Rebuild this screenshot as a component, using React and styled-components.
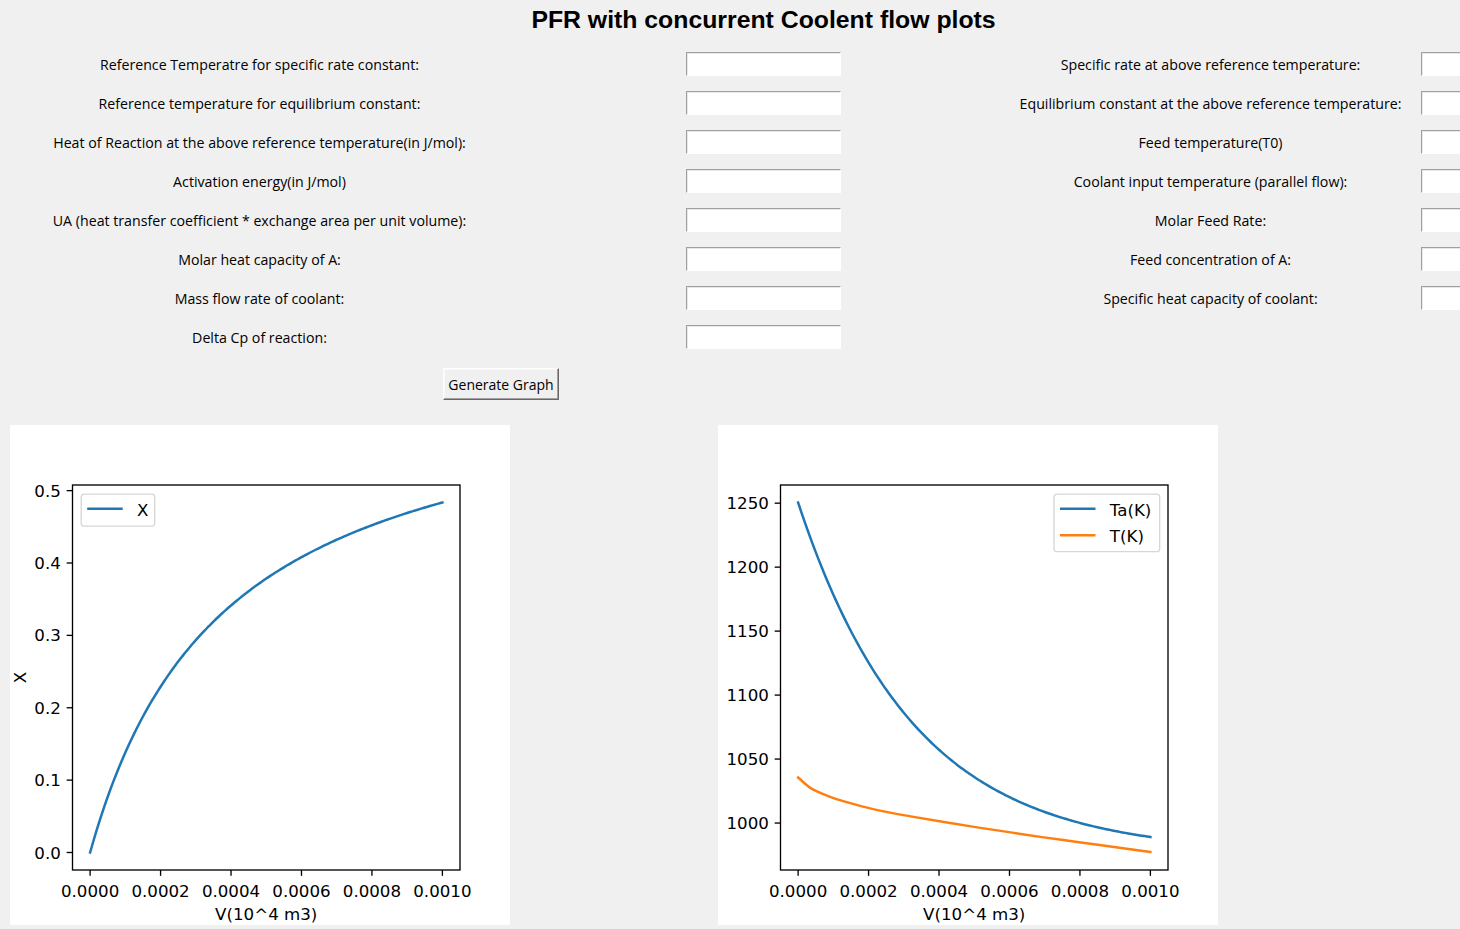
import React from 'react';
import styled, { createGlobalStyle } from 'styled-components';

const GlobalStyle = createGlobalStyle`
  html, body {
    margin: 0;
    padding: 0;
    background: #f0f0f0;
    overflow: hidden;
  }
  * { box-sizing: border-box; }
`;

const Window = styled.div`
  width: 1460px;
  height: 929px;
  background: #f0f0f0;
  overflow: hidden;
  font-family: "Open Sans", "Noto Sans", sans-serif;
  color: #000;
`;

const Form = styled.div`
  display: grid;
  grid-template-columns: 519px 489px 405px 1fr;
  grid-template-rows: 44px;
  grid-auto-rows: 39px;
  align-items: center;
`;

const Title = styled.h1`
  grid-column: 2;
  grid-row: 1;
  align-self: start;
  justify-self: center;
  margin: 0;
  line-height: 40px;
  font-family: "Liberation Sans", Arial, sans-serif;
  font-weight: bold;
  font-size: 24.8px;
  white-space: nowrap;
`;

const Label = styled.label`
  grid-column: ${p => p.$col};
  grid-row: ${p => p.$row};
  justify-self: center;
  padding-top: 2px;
  font-size: 14.2px;
  line-height: 19px;
  white-space: nowrap;
`;

const Entry = styled.input`
  grid-column: ${p => p.$col};
  grid-row: ${p => p.$row};
  justify-self: ${p => (p.$edge ? 'start' : 'center')};
  margin-left: ${p => (p.$edge ? '8px' : '0')};
  width: 155px;
  height: 24px;
  padding: 0 3px;
  background: #fff;
  border: 1px solid;
  border-color: #a0a0a0 #ffffff #ffffff #a0a0a0;
  box-shadow: inset 1px 1px 0 #e8e8e8;
  outline: none;
  font: inherit;
`;

const ButtonRow = styled.div`
  display: flex;
  padding-left: 443px;
  margin-top: 12px;
`;

const TkButton = styled.button`
  width: 116px;
  height: 32px;
  padding: 0;
  background: #f0f0f0;
  border: 1px solid;
  border-color: #ffffff #696969 #696969 #ffffff;
  box-shadow: inset -1px -1px 0 #a0a0a0, inset 1px 1px 0 #f8f8f8;
  font-family: "Open Sans", "Noto Sans", sans-serif;
  font-size: 14px;
  color: #000;
  cursor: pointer;
`;

const ChartRow = styled.div`
  display: flex;
  gap: 208px;
  padding-left: 10px;
  margin-top: 25px;
`;

const Figure = styled.svg`
  display: block;
  width: 500px;
  height: 500px;
  background: #fff;
  font-family: "DejaVu Sans", sans-serif;
`;

const leftFields = [
  'Reference Temperatre for specific rate constant:',
  'Reference temperature for equilibrium constant:',
  'Heat of Reaction at the above reference temperature(in J/mol):',
  'Activation energy(in J/mol)',
  'UA (heat transfer coefficient * exchange area per unit volume):',
  'Molar heat capacity of A:',
  'Mass flow rate of coolant:',
  'Delta Cp of reaction:',
];

const rightFields = [
  'Specific rate at above reference temperature:',
  'Equilibrium constant at the above reference temperature:',
  'Feed temperature(T0)',
  'Coolant input temperature (parallel flow):',
  'Molar Feed Rate:',
  'Feed concentration of A:',
  'Specific heat capacity of coolant:',
];

// V in units of 1e-3 m3
const sample = (fn, n = 120) =>
  Array.from({ length: n + 1 }, (_, i) => {
    const v = i / n;
    return [v, fn(v)];
  });

const conversion = sample(v => (0.6696 * 2.6 * v) / (1 + 2.6 * v));
const coolantTemp = sample(v => 976 + 274.5 * Math.exp(-3.042 * v));
const reactorTemp = [
  [0, 1035.6], [0.0358, 1027.3], [0.0831, 1021.3], [0.1304, 1016.9], [0.2249, 1010.1],
  [0.3194, 1005.2], [0.414, 1000.8], [0.5085, 996.6], [0.603, 992.7], [0.6976, 988.8],
  [0.7921, 985.2], [0.8866, 981.6], [1.0, 977.4],
];

const AX = { left: 62.5, right: 450, top: 60, bottom: 445 };
const FS = 16.67;
const TICK = 5.83;

// monotone cubic through points (already in pixel space, x increasing)
function monotonePath(pts) {
  const n = pts.length;
  const dx = [];
  const m = [];
  for (let i = 0; i < n - 1; i++) {
    dx.push(pts[i + 1][0] - pts[i][0]);
    m.push((pts[i + 1][1] - pts[i][1]) / dx[i]);
  }
  const t = pts.map((_, i) => {
    if (i === 0) return m[0];
    if (i === n - 1) return m[n - 2];
    if (m[i - 1] * m[i] <= 0) return 0;
    return (3 * (dx[i - 1] + dx[i])) /
      ((2 * dx[i] + dx[i - 1]) / m[i - 1] + (dx[i] + 2 * dx[i - 1]) / m[i]);
  });
  let d = `M${pts[0][0].toFixed(2)},${pts[0][1].toFixed(2)}`;
  for (let i = 0; i < n - 1; i++) {
    const h = dx[i] / 3;
    d += ` C${(pts[i][0] + h).toFixed(2)},${(pts[i][1] + t[i] * h).toFixed(2)}` +
      ` ${(pts[i + 1][0] - h).toFixed(2)},${(pts[i + 1][1] - t[i + 1] * h).toFixed(2)}` +
      ` ${pts[i + 1][0].toFixed(2)},${pts[i + 1][1].toFixed(2)}`;
  }
  return d;
}

const xTicks = [0, 0.2, 0.4, 0.6, 0.8, 1.0];

function Plot({ yDomain, yTicks, yFormat, series, legend, yLabel }) {
  const [x0, x1] = [-0.05, 1.05];
  const [y0, y1] = yDomain;
  const sx = v => AX.left + ((v - x0) / (x1 - x0)) * (AX.right - AX.left);
  const sy = v => AX.bottom - ((v - y0) / (y1 - y0)) * (AX.bottom - AX.top);

  return (
    <Figure viewBox="0 0 500 500">
      {series.map(s => (
        <path
          key={s.name}
          d={monotonePath(s.data.map(([v, y]) => [sx(v), sy(y)]))}
          fill="none"
          stroke={s.color}
          strokeWidth="2.5"
          strokeLinecap="square"
        />
      ))}
      <rect
        x={AX.left}
        y={AX.top}
        width={AX.right - AX.left}
        height={AX.bottom - AX.top}
        fill="none"
        stroke="#000"
        strokeWidth="1.33"
      />
      {yTicks.map(t => (
        <g key={t}>
          <line x1={AX.left - TICK} x2={AX.left} y1={sy(t)} y2={sy(t)} stroke="#000" strokeWidth="1.33" />
          <text x={AX.left - 2 * TICK} y={sy(t) + 6.1} fontSize={FS} textAnchor="end" fill="#000">
            {yFormat(t)}
          </text>
        </g>
      ))}
      {xTicks.map(t => (
        <g key={t}>
          <line x1={sx(t)} x2={sx(t)} y1={AX.bottom} y2={AX.bottom + TICK} stroke="#000" strokeWidth="1.33" />
          <text x={sx(t)} y={472.1} fontSize={FS} textAnchor="middle" fill="#000">
            {(t / 1000).toFixed(4)}
          </text>
        </g>
      ))}
      <text x={(AX.left + AX.right) / 2} y={494.5} fontSize={FS} textAnchor="middle" fill="#000">
        V(10^4 m3)
      </text>
      {yLabel && (
        <text
          transform="rotate(-90)"
          x={-(AX.top + AX.bottom) / 2}
          y={15.8}
          fontSize={FS}
          textAnchor="middle"
          fill="#000"
        >
          {yLabel}
        </text>
      )}
      <rect
        x={legend.x}
        y={legend.y}
        width={legend.w}
        height={legend.h}
        rx="3.3"
        fill="#fff"
        fillOpacity="0.8"
        stroke="#cccccc"
        strokeOpacity="0.8"
        strokeWidth="1.33"
      />
      {series.map((s, i) => {
        const cy = legend.y + 14.5 + i * 26.6;
        return (
          <g key={s.name}>
            <line
              x1={legend.x + 6}
              x2={legend.x + 41.5}
              y1={cy}
              y2={cy}
              stroke={s.color}
              strokeWidth="2.5"
            />
            <text x={legend.x + 55.8} y={cy + 7} fontSize={FS} fill="#000">
              {s.name}
            </text>
          </g>
        );
      })}
    </Figure>
  );
}

export default function App() {
  return (
    <Window>
      <GlobalStyle />
      <Form>
        <Title>PFR with concurrent Coolent flow plots</Title>
        {leftFields.map((text, i) => (
          <React.Fragment key={text}>
            <Label $col={1} $row={i + 2}>{text}</Label>
            <Entry $col={2} $row={i + 2} />
          </React.Fragment>
        ))}
        {rightFields.map((text, i) => (
          <React.Fragment key={text}>
            <Label $col={3} $row={i + 2}>{text}</Label>
            <Entry $col={4} $row={i + 2} $edge />
          </React.Fragment>
        ))}
      </Form>
      <ButtonRow>
        <TkButton>Generate Graph</TkButton>
      </ButtonRow>
      <ChartRow>
        <Plot
          yDomain={[-0.02418, 0.50778]}
          yTicks={[0, 0.1, 0.2, 0.3, 0.4, 0.5]}
          yFormat={t => t.toFixed(1)}
          yLabel="X"
          series={[{ name: 'X', color: '#1f77b4', data: conversion }]}
          legend={{ x: 71.2, y: 69.2, w: 73.5, h: 32 }}
        />
        <Plot
          yDomain={[963.3, 1264.2]}
          yTicks={[1000, 1050, 1100, 1150, 1200, 1250]}
          yFormat={t => String(t)}
          series={[
            { name: 'Ta(K)', color: '#1f77b4', data: coolantTemp },
            { name: 'T(K)', color: '#ff7f0e', data: reactorTemp },
          ]}
          legend={{ x: 336, y: 69.2, w: 105.7, h: 57.5 }}
        />
      </ChartRow>
    </Window>
  );
}
